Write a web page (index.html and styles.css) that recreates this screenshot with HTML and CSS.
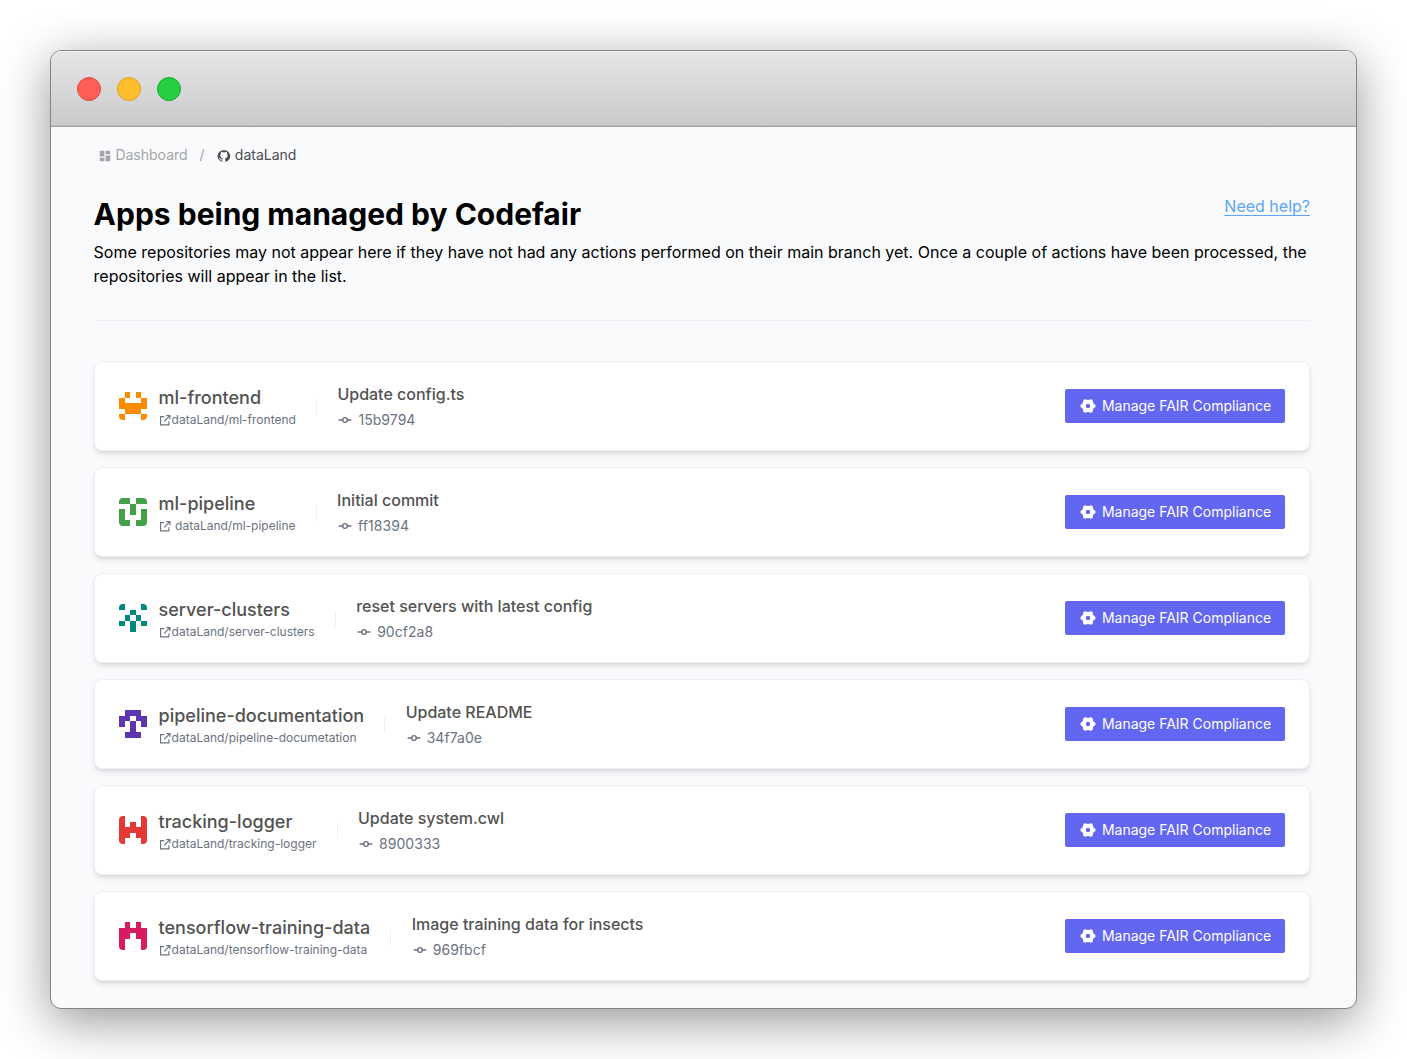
FILE: index.html
```
<!DOCTYPE html>
<html lang="en">
<head>
<meta charset="utf-8">
<title>Codefair - dataLand</title>
<link rel="stylesheet" href="styles.css">
</head>
<body>
<svg class="sprite" aria-hidden="true">
  <symbol id="external" viewBox="0 0 24 24"><path d="M10 5H3v16h16v-7M14 3h7v7M21 3 10 14" fill="none" stroke="currentColor" stroke-width="2.2"/></symbol>
  <symbol id="commit" viewBox="0 0 24 24"><path d="M2 12h6M16 12h6" fill="none" stroke="currentColor" stroke-width="2.6" stroke-linecap="round"/><circle cx="12" cy="12" r="4" fill="none" stroke="currentColor" stroke-width="2.4"/></symbol>
  <symbol id="gear" viewBox="0 0 24 24"><circle cx="12" cy="12" r="6.3" fill="none" stroke="currentColor" stroke-width="6"/><g fill="currentColor"><circle cx="20.300" cy="12" r="3.100"/><circle cx="16.200" cy="4.800" r="3.100"/><circle cx="7.800" cy="4.800" r="3.100"/><circle cx="3.700" cy="12" r="3.100"/><circle cx="7.800" cy="19.200" r="3.100"/><circle cx="16.200" cy="19.200" r="3.100"/></g></symbol>
</svg>
<div class="window">
  <header class="titlebar">
    <span class="light red"></span><span class="light yellow"></span><span class="light green"></span>
  </header>
  <main class="content">
    <nav class="crumbs">
      <a class="crumb"><svg class="crumb-icon" viewBox="0 0 24 24"><path fill="currentColor" d="M4 3h6a1 1 0 0 1 1 1v9H3V4a1 1 0 0 1 1-1Zm9 0h7a1 1 0 0 1 1 1v5h-8ZM3 15h8v6H4a1 1 0 0 1-1-1Zm10-4h8v9a1 1 0 0 1-1 1h-7Z"/></svg>Dashboard</a>
      <span class="slash">/</span>
      <a class="crumb current"><svg class="crumb-icon" viewBox="0 0 24 24"><path fill="currentColor" d="M12 2A10.200 10.200 0 0 0 8.500 22c.6.1.8-.2.8-.6v-1.800c-3 .6-3.800-.8-4-1.400-.2-.4-.8-1.400-1.300-1.700-.5-.2-1.100-.9 0-.9 1 0 1.700.9 2 1.300 1.100 1.600 2.900 1.200 3.600.9.1-.8.4-1.200.8-1.600-3-.4-4.800-1.800-4.800-5 0-1.500.5-2.500 1.200-3.400-.2-.5-.4-1.600.1-2.900 1.300-.1 2.600.7 3.200 1.100 1.200-.3 2.500-.3 3.600 0 .6-.4 1.900-1.200 3.200-1.100.5 1.300.3 2.400.1 2.900.7.9 1.200 1.900 1.200 3.400 0 3.200-1.800 4.600-4.800 5 .5.5.9 1.300.9 2.400v2.800c0 .4.300.7.900.6A10.200 10.200 0 0 0 12 2Z"/></svg>dataLand</a>
    </nav>
    <section class="heading">
      <div class="heading-row"><h1>Apps being managed by Codefair</h1><a class="help">Need help?</a></div>
      <p>Some repositories may not appear here if they have not had any actions performed on their main branch yet. Once a couple of actions have been processed, the repositories will appear in the list.</p>
    </section>
    <hr>
    <div class="list">
      <article class="card">
        <svg class="avatar orange" viewBox="0 0 5 5"><path d="M1 0h1v1H1ZM3 0h1v1H3ZM0 1h1v1h3V1h1v2H4v1H1V3H0ZM0 4h1v1H0ZM4 4h1v1H4Z"/></svg>
        <div class="repo"><h2>ml-frontend</h2><a class="path"><svg><use href="#external"/></svg>dataLand/ml-frontend</a></div>
        <span class="divider"></span>
        <div class="commit"><h3>Update config.ts</h3><a class="hash"><svg><use href="#commit"/></svg>15b9794</a></div>
        <button><svg><use href="#gear"/></svg>Manage FAIR Compliance</button>
      </article>
      <article class="card">
        <svg class="avatar leaf" viewBox="0 0 5 5"><path d="M0 0h2v1H0ZM3 0h2v1H3ZM2 1h1v2H2ZM0 2h1v2h1v1H0ZM4 2h1v3H3V4h1Z"/></svg>
        <div class="repo"><h2>ml-pipeline</h2><a class="path spaced"><svg><use href="#external"/></svg>dataLand/ml-pipeline</a></div>
        <span class="divider"></span>
        <div class="commit"><h3>Initial commit</h3><a class="hash"><svg><use href="#commit"/></svg>ff18394</a></div>
        <button><svg><use href="#gear"/></svg>Manage FAIR Compliance</button>
      </article>
      <article class="card">
        <svg class="avatar teal" viewBox="0 0 5 5"><path d="M0 0h1v1H0ZM4 0h1v1H4ZM2 1h1v1H2ZM1 2h1v1H1ZM3 2h1v1H3ZM0 3h1v1H0ZM2 3h1v2H2ZM4 3h1v1H4Z"/></svg>
        <div class="repo"><h2>server-clusters</h2><a class="path"><svg><use href="#external"/></svg>dataLand/server-clusters</a></div>
        <span class="divider"></span>
        <div class="commit"><h3>reset servers with latest config</h3><a class="hash"><svg><use href="#commit"/></svg>90cf2a8</a></div>
        <button><svg><use href="#gear"/></svg>Manage FAIR Compliance</button>
      </article>
      <article class="card">
        <svg class="avatar purple" viewBox="0 0 5 5"><path d="M1 0h3v1h1v2H4V2H3V1H2v1H1v1H0V1h1ZM2 2h1v2h1v1H1V4h1Z"/></svg>
        <div class="repo"><h2>pipeline-documentation</h2><a class="path"><svg><use href="#external"/></svg>dataLand/pipeline-documetation</a></div>
        <span class="divider"></span>
        <div class="commit"><h3>Update README</h3><a class="hash"><svg><use href="#commit"/></svg>34f7a0e</a></div>
        <button><svg><use href="#gear"/></svg>Manage FAIR Compliance</button>
      </article>
      <article class="card">
        <svg class="avatar crimson" viewBox="0 0 5 5"><path d="M0 0h1v2h1V1h1v1h1V0h1v5H4V4H3V3H2v1H1v1H0Z"/></svg>
        <div class="repo"><h2>tracking-logger</h2><a class="path"><svg><use href="#external"/></svg>dataLand/tracking-logger</a></div>
        <span class="divider"></span>
        <div class="commit"><h3>Update system.cwl</h3><a class="hash"><svg><use href="#commit"/></svg>8900333</a></div>
        <button><svg><use href="#gear"/></svg>Manage FAIR Compliance</button>
      </article>
      <article class="card">
        <svg class="avatar pink" viewBox="0 0 5 5"><path d="M1 0h1v1h1V0h1v1h1v4H4V3H3V2H2v1H1v2H0V1h1Z"/></svg>
        <div class="repo"><h2>tensorflow-training-data</h2><a class="path"><svg><use href="#external"/></svg>dataLand/tensorflow-training-data</a></div>
        <span class="divider"></span>
        <div class="commit"><h3>Image training data for insects</h3><a class="hash"><svg><use href="#commit"/></svg>969fbcf</a></div>
        <button><svg><use href="#gear"/></svg>Manage FAIR Compliance</button>
      </article>
    </div>
  </main>
</div>
</body>
</html>
```
FILE: styles.css
```
* { box-sizing: border-box; }
body { margin: 0; height: 1059px; padding: 50px; overflow: hidden; background: #fff; font-family: Inter, "Liberation Sans", sans-serif; color: #000; }
.sprite { display: none; }
h1, h2, h3, p { margin: 0; }
.window { width: 1307px; height: 959px; border: 1px solid #838485; border-radius: 11px; overflow: hidden; background: #f9fafc; box-shadow: 0 12px 50px rgba(0, 0, 0, .42); }
.titlebar { height: 76px; padding: 0 26px; display: flex; align-items: center; gap: 16px; background: linear-gradient(#e6e6e6, #cacaca); border-bottom: 1px solid #a2a0a1; box-shadow: inset 0 1px #f3f3f3, inset 0 -1px #bdbcbd; }
.light { width: 24px; height: 24px; border-radius: 50%; border: 1px solid; }
.red { background: #ff5f57; border-color: #e2463f; }
.yellow { background: #ffbd2e; border-color: #e1a116; }
.green { background: #28ce42; border-color: #12ac28; }
.content { padding: 17px 46px 0 42.6px; }
.crumbs { display: flex; align-items: center; height: 22px; padding-left: 4px; font-size: 14px; line-height: 22px; color: #a3a5a8; }
.crumb { display: flex; align-items: center; gap: 3.8px; }
.crumb-icon { width: 14px; height: 14px; position: relative; top: 1px; }
.slash { margin: 0 12.4px 0 12px; }
.current { color: #4b4d50; }
.heading { margin-top: 30px; }
.heading-row { display: flex; justify-content: space-between; height: 44px; }
h1 { font-size: 30px; line-height: 36px; font-weight: 700; }
.help { margin-top: -2px; font-size: 16px; line-height: 24px; height: 20px; color: #60a5fa; text-decoration: underline; text-underline-offset: 3px; }
p { font-size: 16px; line-height: 24px; }
hr { margin: 32px 0 40px; border: 0; border-top: 1px solid #eeeff3; }
.list { display: flex; flex-direction: column; gap: 16px; padding-left: .4px; }
.card { height: 90px; width: 1216px; display: flex; align-items: center; padding: 0 24px; background: #fff; border: 1px solid #efeff5; border-radius: 8px; box-shadow: 0 4px 6px -1px rgba(0, 0, 0, .1), 0 2px 4px -2px rgba(0, 0, 0, .1); }
.avatar { width: 28px; height: 28px; border-radius: 4px; margin-right: 11.6px; fill: currentColor; shape-rendering: crispEdges; }
.orange { color: #fb8c00; }
.leaf { color: #43a047; }
.teal { color: #00897b; }
.purple { color: #5e35b1; }
.crimson { color: #e53935; }
.pink { color: #d81b60; }
h2 { font-size: 18px; line-height: 28px; font-weight: 500; color: #525252; }
.path { display: flex; align-items: center; height: 16px; font-size: 12px; line-height: 16px; color: #6b7280; }
.path svg { width: 12.500px; height: 12.500px; margin-left: .5px; position: relative; top: .7px; }
.spaced svg { margin-right: 3.5px; }
.divider { width: 1px; height: 16px; margin: 2px 20.5px 0 20px; background: #efeff5; }
.commit { margin-top: -1px; }
h3 { font-size: 16px; line-height: 24px; font-weight: 500; color: #525252; }
.hash { display: flex; align-items: center; gap: 6px; margin-top: 4px; font-size: 14px; line-height: 20px; letter-spacing: .05px; color: #6b7280; }
.hash svg { width: 14px; height: 14px; margin-left: 1px; }
button { display: flex; align-items: center; justify-content: center; gap: 6px; width: 220px; height: 34px; margin-left: auto; padding: 0 0 0 1px; border: 0; border-radius: 2px; background: #6366f1; color: #fff; font: 400 14px/20px Inter, sans-serif; }
button svg { width: 16px; height: 16px; }
```
